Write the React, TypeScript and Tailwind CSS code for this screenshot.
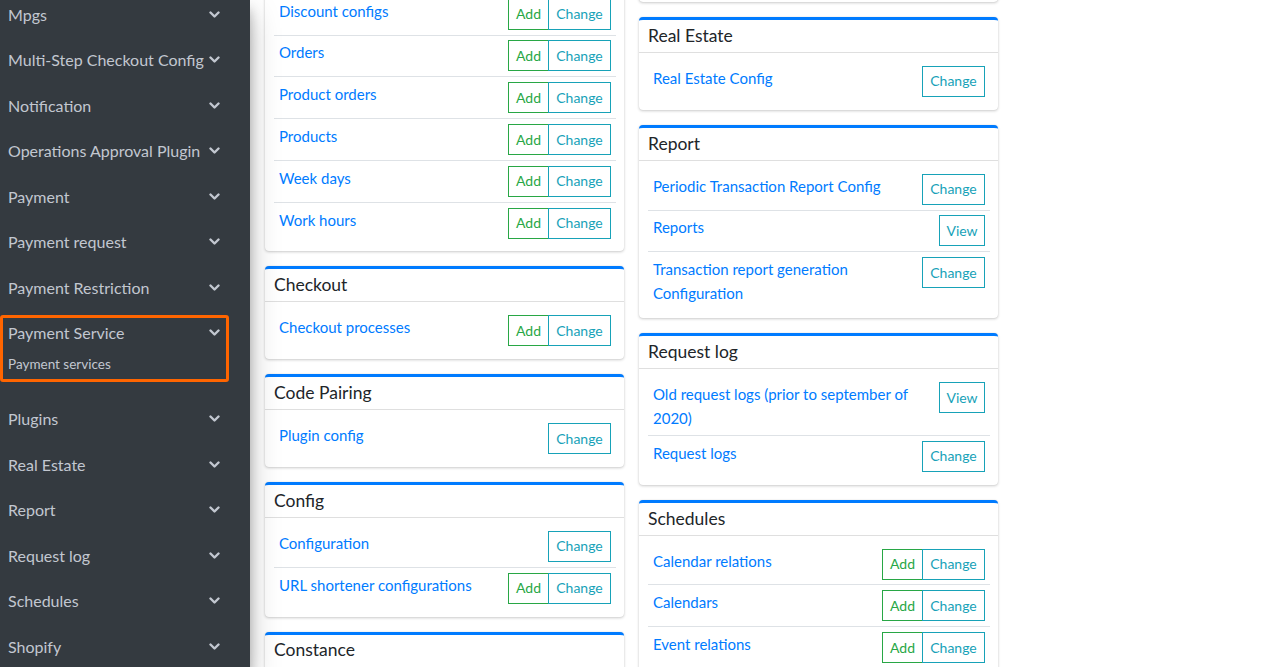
import React from "react";

type Row = { name: React.ReactNode; add?: boolean; change?: boolean; view?: boolean };
type Card = { title: string; rows: Row[] };

const col1: Card[] = [
  {
    title: "Catalog",
    rows: [
      { name: "Discount codes", add: true, change: true },
      { name: "Discount configs", add: true, change: true },
      { name: "Orders", add: true, change: true },
      { name: "Product orders", add: true, change: true },
      { name: "Products", add: true, change: true },
      { name: "Week days", add: true, change: true },
      { name: "Work hours", add: true, change: true },
    ],
  },
  { title: "Checkout", rows: [{ name: "Checkout processes", add: true, change: true }] },
  { title: "Code Pairing", rows: [{ name: "Plugin config", change: true }] },
  {
    title: "Config",
    rows: [
      { name: "Configuration", change: true },
      { name: "URL shortener configurations", add: true, change: true },
    ],
  },
  { title: "Constance", rows: [{ name: "Config", change: true }] },
];

const col2: Card[] = [
  { title: "Real Estate", rows: [{ name: "Real Estate Config", change: true }] },
  {
    title: "Report",
    rows: [
      { name: "Periodic Transaction Report Config", change: true },
      { name: "Reports", view: true },
      {
        name: (
          <>
            Transaction report generation
            <br />
            Configuration
          </>
        ),
        change: true,
      },
    ],
  },
  {
    title: "Request log",
    rows: [
      {
        name: (
          <>
            Old request logs (prior to september of
            <br />
            2020)
          </>
        ),
        view: true,
      },
      { name: "Request logs", change: true },
    ],
  },
  {
    title: "Schedules",
    rows: [
      { name: "Calendar relations", add: true, change: true },
      { name: "Calendars", add: true, change: true },
      { name: "Event relations", add: true, change: true },
      { name: "Events", add: true, change: true },
      { name: "Occurrences", add: true, change: true },
    ],
  },
];

const sideItems = [
  "Mpgs",
  "Multi-Step Checkout Config",
  "Notification",
  "Operations Approval Plugin",
  "Payment",
  "Payment request",
  "Payment Restriction",
];
const sideItems2 = ["Plugins", "Real Estate", "Report", "Request log", "Schedules", "Shopify"];

function Chevron() {
  return (
    <svg width="11" height="8" viewBox="0 0 11 8" className="shrink-0">
      <path d="M1.5 1.5 L5.5 5.5 L9.5 1.5" fill="none" stroke="#c2c7d0" strokeWidth="2.4" strokeLinecap="round" strokeLinejoin="round" />
    </svg>
  );
}

function SideItem({ label }: { label: string }) {
  return (
    <div className="h-[45.5px] flex items-center justify-between pl-2 pr-[30px] text-[16px] text-[#c2c7d0] whitespace-nowrap">
      <span>{label}</span>
      <Chevron />
    </div>
  );
}

function Buttons({ row }: { row: Row }) {
  return (
    <div className="flex shrink-0 text-[14px] leading-none">
      {row.add && (
        <span className="w-[41px] h-[31px] flex items-center justify-center border border-[#28a745] text-[#28a745]">Add</span>
      )}
      {row.change && (
        <span
          className={
            "w-[63px] h-[31px] flex items-center justify-center border border-[#17a2b8] text-[#17a2b8] " +
            (row.add ? "-ml-px" : "")
          }
        >
          Change
        </span>
      )}
      {row.view && (
        <span className="w-[46px] h-[31px] flex items-center justify-center border border-[#17a2b8] text-[#17a2b8]">View</span>
      )}
    </div>
  );
}

function CardBox({ card }: { card: Card }) {
  return (
    <div className="bg-white rounded-[4px] border-t-[3px] border-[#007bff] shadow-[0_0_1px_rgba(0,0,0,0.125),0_1px_3px_rgba(0,0,0,0.2)]">
      <div className="h-[33px] flex items-center pl-[9px] text-[17.5px] text-[#212529] border-b border-[rgba(0,0,0,0.125)]">
        {card.title}
      </div>
      <div className="pl-[9px] pr-2 py-2">
        {card.rows.map((r, i) => (
          <div
            key={i}
            className={"flex justify-between items-start py-[4.9px] px-[5px] " + (i > 0 ? "border-t border-[#dee2e6]" : "")}
          >
            <span className="text-[15px] leading-6 text-[#007bff] whitespace-nowrap">{r.name}</span>
            <Buttons row={r} />
          </div>
        ))}
      </div>
    </div>
  );
}

export default function App() {
  return (
    <div
      className="w-[1263px] h-[667px] overflow-hidden flex bg-white"
      style={{ fontFamily: "Lato, 'Noto Sans', sans-serif" }}
    >
      <aside className="w-[250px] shrink-0 h-full bg-[#343a40] relative z-10 shadow-[0_14px_28px_rgba(0,0,0,0.25),0_10px_10px_rgba(0,0,0,0.22)]">
        <div className="-mt-2">
          {sideItems.map((s) => (
            <SideItem key={s} label={s} />
          ))}
          <div className="relative">
            <SideItem label="Payment Service" />
            <div className="h-[40.5px] pl-2 text-[13.5px] leading-[17px] text-[#c2c7d0]">Payment services</div>
            <div className="absolute left-0 top-[4px] w-[229px] h-[67px] border-[3px] border-[#ff6500] rounded-[3px]" />
          </div>
          {sideItems2.map((s) => (
            <SideItem key={s} label={s} />
          ))}
        </div>
      </aside>
      <main className="flex-1 pl-[15px] flex gap-[15px] items-start">
        <div className="w-[359px] flex flex-col gap-[15px] -mt-[92px]">
          {col1.map((c) => (
            <CardBox key={c.title} card={c} />
          ))}
        </div>
        <div className="w-[359px] flex flex-col gap-[15px] -mt-[100px]">
          <div className="h-[102px] bg-white rounded-[4px] shadow-[0_0_1px_rgba(0,0,0,0.125),0_1px_3px_rgba(0,0,0,0.2)]" />
          {col2.map((c) => (
            <CardBox key={c.title} card={c} />
          ))}
        </div>
      </main>
    </div>
  );
}
